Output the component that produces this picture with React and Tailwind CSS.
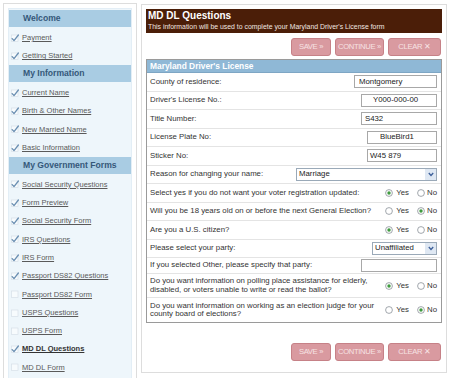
import React from "react";

const F = { fontFamily: '"Liberation Sans", Arial, sans-serif' };

function Check({ on }) {
  return (
    <svg width="8" height="8" viewBox="0 0 8 8" className="shrink-0">
      <rect x="0.5" y="1" width="6.5" height="6.5" fill="#f7fbfd" stroke="#d6e0e8" strokeWidth="0.7" />
      {on && (
        <path d="M1.2 4.6 L3 6.6 L7.4 1" fill="none" stroke="#6b8fb2" strokeWidth="1.3" strokeLinecap="round" strokeLinejoin="round" />
      )}
    </svg>
  );
}

function Item({ label, on, bold }) {
  return (
    <div className="flex items-center h-[18.3px] pl-[2px] gap-[3px]">
      <Check on={on} />
      <span className={`text-[7.5px] underline ${bold ? "font-bold text-[#333]" : "text-[#5a5a5a]"}`}>{label}</span>
    </div>
  );
}

function Head({ children }) {
  return (
    <div className="h-[17px] bg-[#a9cce3] flex items-center pl-[14px] text-[8.6px] font-bold text-[#35587a]">
      {children}
    </div>
  );
}

function Buttons() {
  const b = "h-[18px] rounded-[3px] bg-[#d99aa0] border border-[#c68187] text-[#f7e3e4] text-[7.6px] tracking-[-0.3px] whitespace-nowrap flex items-center justify-center";
  return (
    <div className="flex justify-end gap-[4px] pr-[1px]">
      <div className={`${b} w-[40px]`}>SAVE »</div>
      <div className={`${b} w-[49px]`}>CONTINUE »</div>
      <div className={`${b} w-[53px]`}>CLEAR ✕</div>
    </div>
  );
}

function Row({ label, children, h = "h-[18.5px]", last }) {
  return (
    <div className={`flex items-center justify-between ${h} ${last ? "" : "border-b border-[#e4e4e4]"} pl-[3px] pr-[4px] text-[7.8px] text-[#333]`}>
      <div className="leading-[8.5px]">{label}</div>
      {children}
    </div>
  );
}

function Input({ w, value, pl }) {
  return (
    <div className="h-[13px] border border-[#a8a8a8] bg-white flex items-center text-[7.8px] text-[#222]" style={{ width: w, paddingLeft: pl }}>
      {value}
    </div>
  );
}

function Select({ w, value }) {
  return (
    <div className="h-[13px] border border-[#9aa9b8] bg-white flex items-center justify-between pl-[2px] text-[7.8px] text-[#222]" style={{ width: w }}>
      <span>{value}</span>
      <div className="w-[11px] h-full bg-[#dfe8f3] flex items-center justify-center">
        <svg width="6" height="5" viewBox="0 0 6 5">
          <path d="M0.8 1 L3 3.5 L5.2 1" fill="none" stroke="#3c5f9a" strokeWidth="1.3" />
        </svg>
      </div>
    </div>
  );
}

function Radio({ on }) {
  return (
    <svg width="8" height="8" viewBox="0 0 8 8" className="shrink-0">
      <circle cx="4" cy="4" r="3.4" fill="#fff" stroke="#8a9098" strokeWidth="0.8" />
      {on && <circle cx="4" cy="4" r="1.7" fill="#3f9a3f" />}
    </svg>
  );
}

function YesNo({ yes }) {
  return (
    <div className="flex items-center text-[7.8px] text-[#333]">
      <Radio on={yes} />
      <span className="ml-[3px] mr-[8px]">Yes</span>
      <Radio on={!yes} />
      <span className="ml-[2px]">No</span>
    </div>
  );
}

export default function App() {
  return (
    <div className="w-[450px] h-[378px] overflow-hidden bg-white flex items-start" style={F}>
      {/* Sidebar */}
      <div className="ml-[3px] mt-[3px] w-[134px] h-[390px] border border-[#dddddd] p-[4px] shrink-0">
        <div className="bg-[#eef6fb] h-full border border-[#e3eef6] pt-[1px]">
          <Head>Welcome</Head>
          <div className="pt-[1.5px]">
            <Item label="Payment" on />
            <Item label="Getting Started" on />
          </div>
          <Head>My Information</Head>
          <div className="pt-[1.5px]">
            <Item label="Current Name" on />
            <Item label="Birth & Other Names" on />
            <Item label="New Married Name" on />
            <Item label="Basic Information" on />
          </div>
          <Head>My Government Forms</Head>
          <div className="pt-[1.5px]">
            <Item label="Social Security Questions" on />
            <Item label="Form Preview" on />
            <Item label="Social Security Form" on />
            <Item label="IRS Questions" on />
            <Item label="IRS Form" on />
            <Item label="Passport DS82 Questions" on />
            <Item label="Passport DS82 Form" />
            <Item label="USPS Questions" />
            <Item label="USPS Form" />
            <Item label="MD DL Questions" on bold />
            <Item label="MD DL Form" />
          </div>
        </div>
      </div>

      {/* Main */}
      <div className="ml-[4px] mt-[4px] w-[306px] h-[369px] border border-[#dddddd] p-[4px] shrink-0">
        <div className="h-[24px] bg-[#4b1e08] px-[2px] pt-[1px] text-white">
          <div className="text-[10px] font-bold leading-[12px]">MD DL Questions</div>
          <div className="text-[6.9px] leading-[9px] text-[#f1e6e0]">This information will be used to complete your Maryland Driver's License form</div>
        </div>
        <div className="mt-[5px]">
          <Buttons />
        </div>
        <div className="mt-[3px] border border-[#9a9a9a] bg-white">
          <div className="h-[13px] bg-[#8fb8d6] flex items-center pl-[3px] text-[8.4px] font-bold text-white border-b border-[#7ea6c4]">
            Maryland Driver's License
          </div>
          <Row label="County of residence:"><Input w="83px" value="Montgomery" pl="4px" /></Row>
          <Row label="Driver's License No.:"><Input w="76px" value="Y000-000-00" pl="11px" /></Row>
          <Row label="Title Number:"><Input w="76px" value="S432" pl="3px" /></Row>
          <Row label="License Plate No:"><Input w="70px" value="BlueBird1" pl="12px" /></Row>
          <Row label="Sticker No:"><Input w="70px" value="W45 879" pl="2px" /></Row>
          <Row label="Reason for changing your name:"><Select w="141px" value="Marriage" /></Row>
          <Row label="Select yes if you do not want your voter registration updated:"><YesNo yes /></Row>
          <Row label="Will you be 18 years old on or before the next General Election?"><YesNo /></Row>
          <Row label="Are you a U.S. citizen?"><YesNo yes /></Row>
          <Row label="Please select your party:"><Select w="65px" value="Unaffiliated" /></Row>
          <Row label="If you selected Other, please specify that party:" h="h-[16px]"><Input w="76px" value="" /></Row>
          <Row h="h-[24px]" label={<>Do you want information on polling place assistance for elderly,<br />disabled, or voters unable to write or read the ballot?</>}><YesNo yes /></Row>
          <Row h="h-[24px]" last label={<>Do you want information on working as an election judge for your<br />county board of elections?</>}><YesNo /></Row>
        </div>
        <div className="mt-[20px]">
          <Buttons />
        </div>
      </div>
    </div>
  );
}
